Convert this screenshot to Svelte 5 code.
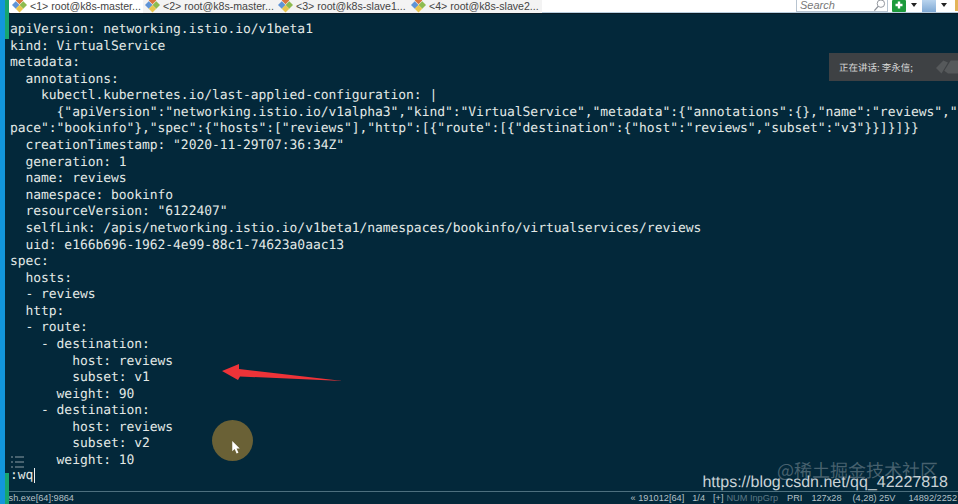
<script>
  const lines = [
    'apiVersion: networking.istio.io/v1beta1',
    'kind: VirtualService',
    'metadata:',
    '  annotations:',
    '    kubectl.kubernetes.io/last-applied-configuration: |',
    '      {"apiVersion":"networking.istio.io/v1alpha3","kind":"VirtualService","metadata":{"annotations":{},"name":"reviews","names',
    'pace":"bookinfo"},"spec":{"hosts":["reviews"],"http":[{"route":[{"destination":{"host":"reviews","subset":"v3"}}]}]}}',
    '  creationTimestamp: "2020-11-29T07:36:34Z"',
    '  generation: 1',
    '  name: reviews',
    '  namespace: bookinfo',
    '  resourceVersion: "6122407"',
    '  selfLink: /apis/networking.istio.io/v1beta1/namespaces/bookinfo/virtualservices/reviews',
    '  uid: e166b696-1962-4e99-88c1-74623a0aac13',
    'spec:',
    '  hosts:',
    '  - reviews',
    '  http:',
    '  - route:',
    '    - destination:',
    '        host: reviews',
    '        subset: v1',
    '      weight: 90',
    '    - destination:',
    '        host: reviews',
    '        subset: v2',
    '      weight: 10'
  ]

  const tabs = [
    '<1> root@k8s-master...',
    '<2> root@k8s-master...',
    '<3> root@k8s-slave1...',
    '<4> root@k8s-slave2...'
  ]

  // gap is the space before each item, the bar's spacing isn't even
  const status = [
    { text: '« 191012[64]', gap: 0 },
    { text: '1/4', gap: 8 },
    { text: '[+]', gap: 8 },
    { text: 'NUM InpGrp', gap: 3, dim: true },
    { text: 'PRI', gap: 9 },
    { text: '127x28', gap: 9 },
    { text: '(4,28) 25V', gap: 11 },
    { text: '14892/2252', gap: 13 }
  ]
</script>

<div class="window">
  <div class="accent"></div>
  <div class="green-top"></div>
  <div class="green-bottom"></div>
  <div class="main">
    <header class="tabbar">
      <div class="tabs">
        {#each tabs as tab, i}
          <div class="tab" class:active={i === 0}>
            <svg class="tab-icon" viewBox="0 0 16 13" width="15" height="13">
              <path d="M8 -4 L12 0 L8 4 L4 0 Z" fill="#d9763f" />
              <path d="M12 1 L16 5 L12 9 L8 5 Z" fill="#8dbb4f" />
              <path d="M4 1 L8 5 L4 9 L0 5 Z" fill="#5f94d6" />
              <path d="M8 5 L12 9 L8 13 L4 9 Z" fill="#e7c64e" />
            </svg>
            <span>{tab}</span>
          </div>
        {/each}
      </div>
      <div class="tools">
        <div class="search">
          <span>Search</span>
          <svg viewBox="0 0 14 14" width="13" height="13">
            <circle cx="8.5" cy="5" r="4" fill="none" stroke="#8a8f96" />
            <path d="M5.5 8 L1.5 12.5" stroke="#8a8f96" stroke-width="1.4" />
          </svg>
        </div>
        <svg class="plus" viewBox="0 0 14 12" width="14" height="12">
          <rect width="14" height="12" rx="1" fill="#1d9a3c" />
          <path d="M7 1.5 V8.5 M3.5 5 H10.5" stroke="#fff" stroke-width="2.4" />
        </svg>
        <div class="caret"></div>
        <div class="blue-btn"></div>
        <div class="caret"></div>
        <div class="lock"></div>
      </div>
    </header>

    <main class="terminal">
      <pre class="code">{lines.join('\n')}</pre>
      <div class="prompt">:wq<span class="cursor"></span></div>

      <div class="speaker">
        <span>正在讲话: 李永信;</span>
        <svg viewBox="0 0 24 16" width="24" height="16">
          <path d="M0 9 L8 1 L13 3 L6 15 Z" fill="#56595b" />
          <path d="M9 12 L16 1 L24 1 L24 15 L13 15 Z" fill="#56595b" />
        </svg>
      </div>

      <svg class="arrow" viewBox="0 0 122 18" width="122" height="18">
        <path d="M0 7 L17 0 L17 5 L121 17 L18 12.5 L16 16 Z" fill="#ee3338" />
      </svg>

      <div class="pointer-halo">
        <svg viewBox="0 0 10 16" width="10" height="15">
          <path d="M1 1 L1 12 L3.6 9.6 L5.6 14.4 L7.6 13.6 L5.6 9 L9 9 Z" fill="#fff" />
        </svg>
      </div>

      <svg class="list-icon" viewBox="0 0 13 12" width="13" height="12">
        <path d="M4 1 H13 M4 6 H13 M4 11 H13 M0 1 H2 M0 6 H2 M0 11 H2" stroke="#8c9ca4" stroke-width="1" />
      </svg>

      <div class="watermark">
        <div class="wm-cn">@稀土掘金技术社区</div>
        <div class="wm-url">https://blog.csdn.net/qq_42227818</div>
      </div>
    </main>

    <footer class="statusbar">
      <span class="proc">ssh.exe[64]:9864</span>
      <div class="status-right">
        {#each status as item}
          <span class:dim={item.dim} style:margin-left="{item.gap}px">{item.text}</span>
        {/each}
      </div>
    </footer>
  </div>
</div>

<style>
  :global(body) {
    margin: 0;
    background: #03283a;
  }

  .window {
    position: relative;
    display: flex;
    width: 958px;
    height: 504px;
    overflow: hidden;
    background: #03283a;
  }

  .accent {
    position: absolute;
    left: 0;
    top: 0;
    bottom: 0;
    width: 5px;
    background: #1296dc;
    z-index: 2;
  }

  .green-top,
  .green-bottom {
    position: absolute;
    left: 5px;
    width: 4px;
    background: #17a56f;
    z-index: 2;
  }

  .green-top {
    top: 0;
    height: 39px;
  }

  .green-bottom {
    top: 473px;
    bottom: 0;
  }

  .main {
    flex: 1;
    min-width: 0;
    display: flex;
    flex-direction: column;
  }

  .tabbar {
    height: 13px;
    flex: none;
    display: flex;
    justify-content: space-between;
    background: #fff;
    border-bottom: 1px solid #0a1b25;
    box-shadow: inset 0 -1px 0 #b9cfe0;
    font: 10.6px "Liberation Sans", sans-serif;
    color: #444;
    overflow: hidden;
  }

  .tabs {
    display: flex;
    padding-left: 10px;
  }

  .tab {
    width: 133px;
    height: 13px;
    box-sizing: border-box;
    padding-left: 2px;
    display: flex;
    align-items: center;
    gap: 3px;
    white-space: nowrap;
    background: #f3f3f3;
    line-height: 13px;
  }

  .tab.active {
    background: #fff;
  }

  .tools {
    display: flex;
    align-items: flex-start;
    gap: 3px;
    margin-right: -4px;
  }

  .search {
    width: 92px;
    height: 12px;
    box-sizing: border-box;
    border: 1px solid #b8c4d0;
    border-top: 0;
    margin-right: 1px;
    display: flex;
    justify-content: space-between;
    align-items: center;
    font-style: italic;
    color: #777;
    font-size: 11px;
    line-height: 11px;
    padding: 0 1px 0 3px;
  }

  .caret {
    width: 0;
    height: 0;
    margin: 3px 2px 0 2px;
    border: 3px solid transparent;
    border-top: 4px solid #222;
    border-bottom: 0;
  }

  .blue-btn {
    width: 14px;
    height: 12px;
    background: linear-gradient(#b9d4ee, #7fa9d4);
  }

  .lock {
    width: 7px;
    height: 11px;
    margin-left: 3px;
    background: #e3b458;
  }

  .terminal {
    position: relative;
    flex: 1;
    min-height: 0;
    padding: 8px 0 0 10px;
    overflow: hidden;
    color: #e2e8e6;
    font: 13px/16.58px "DejaVu Sans Mono", "Liberation Mono", monospace;
    letter-spacing: -0.06px;
    text-rendering: geometricPrecision;
  }

  .code {
    margin: 0;
    font: inherit;
    white-space: pre;
  }

  .prompt {
    display: flex;
    align-items: center;
    margin-top: -2px;
  }

  .cursor {
    display: inline-block;
    width: 1px;
    height: 15px;
    margin-left: 1px;
    background: #f0f0f0;
  }

  .speaker {
    position: absolute;
    top: 39px;
    right: 0;
    width: 129px;
    height: 28px;
    box-sizing: border-box;
    padding-left: 10px;
    display: flex;
    align-items: center;
    gap: 23px;
    white-space: nowrap;
    background: #3e4144;
    color: #d6d6d6;
    font: 9.5px "Noto Sans CJK SC", sans-serif;
    letter-spacing: 0;
  }

  .arrow {
    position: absolute;
    left: 222px;
    top: 350px;
  }

  .pointer-halo {
    position: absolute;
    left: 212px;
    top: 406px;
    width: 41px;
    height: 41px;
    border-radius: 50%;
    background: #6a6136;
  }

  .pointer-halo svg {
    position: absolute;
    left: 19px;
    top: 20px;
  }

  .list-icon {
    position: absolute;
    left: 11px;
    top: 442px;
  }

  .watermark {
    position: absolute;
    right: 10px;
    bottom: 0;
    text-align: right;
    letter-spacing: 0;
    font-family: "Liberation Sans", sans-serif;
    line-height: 1;
    pointer-events: none;
  }

  .wm-cn {
    font: 18px/18px "Noto Sans CJK SC", sans-serif;
    color: rgba(140, 155, 162, 0.5);
    margin-right: 10px;
    margin-bottom: -4px;
  }

  .wm-url {
    font-size: 16px;
    color: #c9d2d6;
  }

  .statusbar {
    position: relative;
    height: 12px;
    flex: none;
    display: flex;
    justify-content: space-between;
    align-items: center;
    padding: 0 1px 0 4px;
    border-top: 1px solid #4d6f7e;
    background: #03283a;
    color: #b4c0c6;
    font: 9.2px/12px "Liberation Sans", sans-serif;
    overflow: hidden;
    white-space: nowrap;
  }

  .status-right {
    display: flex;
  }

  .dim {
    color: #5d7885;
  }
</style>
